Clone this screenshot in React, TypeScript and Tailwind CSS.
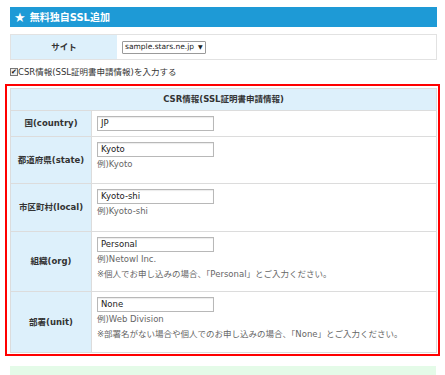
import React from "react";

const F = { fontFamily: '"DejaVu Sans", "Noto Sans CJK JP", sans-serif' };

function Input({ value }: { value: string }) {
  return (
    <div className="w-[117px] h-[15px] border border-[#b8b8b8] bg-white pl-[3px] text-[8.5px] leading-[13px] text-[#222] shadow-[inset_0_1px_1px_rgba(0,0,0,0.08)]">
      {value}
    </div>
  );
}

function Row({
  label,
  h,
  value,
  hints,
}: {
  label: string;
  h: string;
  value: string;
  hints?: string[];
}) {
  return (
    <div className={`flex border-t border-[#dcdcdc] ${h}`}>
      <div className="w-[81px] shrink-0 bg-[#ddf0fb] border-r border-[#dcdcdc] flex items-center justify-center font-bold text-[8.5px] text-[#333]">
        {label}
      </div>
      <div className="flex-1 bg-white pl-[5px] pt-[5px]">
        <Input value={value} />
        {hints?.map((t, i) => (
          <div key={i} className="text-[8.5px] leading-[15px] text-[#666] whitespace-nowrap">
            {t}
          </div>
        ))}
      </div>
    </div>
  );
}

export default function App() {
  return (
    <div className="w-[445px] h-[375px] bg-white overflow-hidden text-[#333]" style={F}>
      <div className="pl-[10px] pr-[8px] pt-[7px]">
        <div className="h-[20px] bg-[#1e9ad6] flex items-center pl-[4px] text-white font-bold text-[10px]">
          <span className="text-[13px] leading-none mr-[4px]">★</span>
          <span>無料独自SSL追加</span>
        </div>

        <div className="mt-[7px] h-[26px] flex border border-[#e2e2e2]">
          <div className="w-[106px] bg-[#ddf0fb] flex items-center justify-center font-bold text-[8.5px]">
            サイト
          </div>
          <div className="flex-1 flex items-center pl-[5px]">
            <div className="h-[13px] border border-[#9a9a9a] rounded-[1px] bg-white flex items-center px-[2px] text-[7.5px] text-[#222] leading-none">
              <span>sample.stars.ne.jp</span>
              <span className="ml-[4px] text-[6px]">▼</span>
            </div>
          </div>
        </div>

        <div className="h-[24px] flex items-center text-[8.5px] text-[#333]">
          <span className="w-[8px] h-[8px] border border-[#777] bg-[#eee] flex items-center justify-center text-[7px] leading-none text-[#111]">
            ✔
          </span>
          <span>CSR情報(SSL証明書申請情報)を入力する</span>
        </div>

        <div className="ml-[-5px] mr-[-3px] border-2 border-[#ff0000] pl-[3px] pr-[1px] pt-[2px] pb-[1px]">
          <div className="border border-[#dcdcdc] border-t-0">
            <div className="h-[22px] bg-[#ddf0fb] border-t border-[#dcdcdc] flex items-center justify-center font-bold text-[8.5px]">
              CSR情報(SSL証明書申請情報)
            </div>
            <Row label="国(country)" h="h-[26px]" value="JP" />
            <Row label="都道府県(state)" h="h-[47px]" value="Kyoto" hints={["例)Kyoto"]} />
            <Row label="市区町村(local)" h="h-[48px]" value="Kyoto-shi" hints={["例)Kyoto-shi"]} />
            <Row
              label="組織(org)"
              h="h-[60px]"
              value="Personal"
              hints={["例)Netowl Inc.", "※個人でお申し込みの場合、「Personal」とご入力ください。"]}
            />
            <Row
              label="部署(unit)"
              h="h-[61px]"
              value="None"
              hints={["例)Web Division", "※部署名がない場合や個人でのお申し込みの場合、「None」とご入力ください。"]}
            />
          </div>
        </div>

        <div className="mt-[10px] h-[20px] bg-[#e4fbe8] mr-[1px]"></div>
      </div>
    </div>
  );
}
